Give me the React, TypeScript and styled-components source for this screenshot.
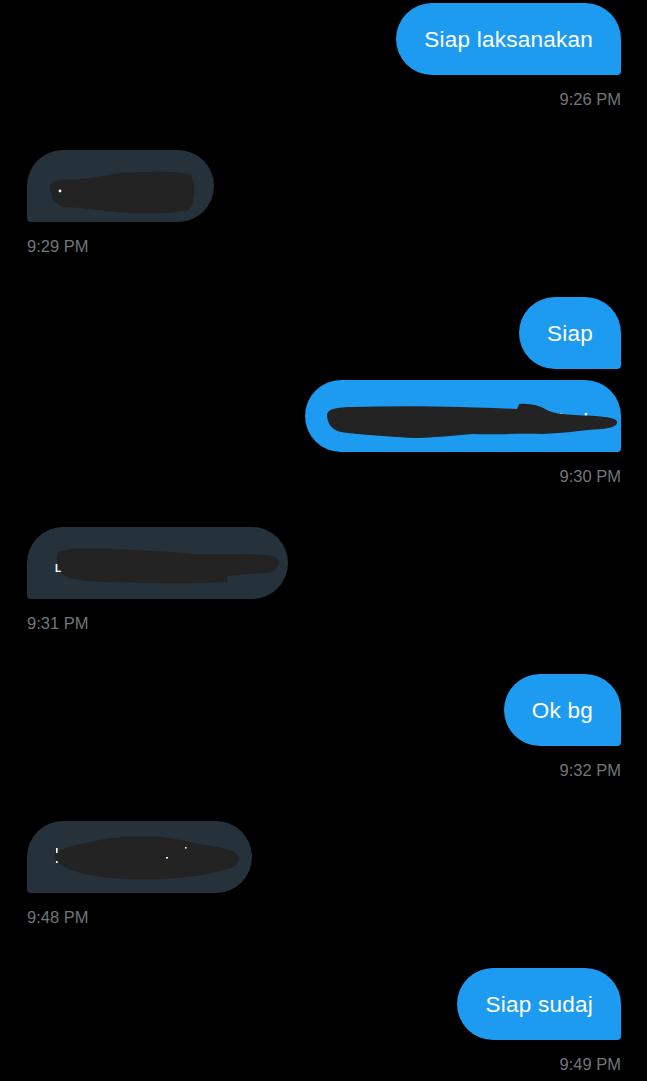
import React from 'react';
import styled, { createGlobalStyle } from 'styled-components';

const GlobalStyle = createGlobalStyle`
  html, body {
    margin: 0;
    background: #000;
  }
  body {
    font-family: "Liberation Sans", Arial, sans-serif;
  }
`;

const Thread = styled.div`
  display: flex;
  flex-direction: column;
  box-sizing: border-box;
  min-height: 1081px;
  padding: 3px 26px 0 27px;
  background: #000;
`;

const Group = styled.div<{ $mine: boolean }>`
  display: flex;
  flex-direction: column;
  align-items: ${(p) => (p.$mine ? 'flex-end' : 'flex-start')};
  gap: 11px;
  margin-bottom: 41px;
`;

const Bubble = styled.div<{ $mine: boolean }>`
  padding: 23px 28px 21px;
  font-size: 22.5px;
  line-height: 28px;
  letter-spacing: 0.25px;
  color: #fff;
  white-space: nowrap;
  background: ${(p) => (p.$mine ? '#1d9bf0' : '#26323b')};
  border-radius: 36px;
  ${(p) =>
    p.$mine ? 'border-bottom-right-radius: 4px;' : 'border-bottom-left-radius: 4px;'}
`;

const Redacted = styled.svg`
  display: block;
  height: 28px;
  margin: -1px 0 1px;
  overflow: visible;
`;

const Time = styled.div`
  margin-top: 3px;
  font-size: 16.5px;
  line-height: 20px;
  color: #71767b;
`;

const INK = '#232323';

// hand scribbles drawn over the hidden text
const scribbles: Record<string, React.ReactNode> = {
  a: (
    <>
      <path
        fill={INK}
        d="M -5 14 C -5 9, 5 7, 20 7 C 45 6, 50 2, 70 1 C 100 -1, 125 -1, 136 3 C 141 12, 141 30, 134 38 C 115 42, 90 42, 70 41 C 50 39, 30 36, 10 35 C -2 33, -5 24, -5 14 Z"
      />
      <circle cx={5} cy={19} r={1.4} fill="#fff" />
    </>
  ),
  b: (
    <>
      <text x={214} y={27} fill="#fff" fontSize={22} fontFamily="Liberation Sans, sans-serif">
        ified
      </text>
      <path
        fill={INK}
        d="M -6 13 C -6 7, 4 5, 20 5 C 80 3, 140 5, 184 7 L 186 2 C 196 1, 206 3, 214 8 C 220 12, 240 13, 262 14 C 278 15, 285 17, 284 21 C 283 26, 272 27, 255 28 C 240 30, 225 31, 210 32 C 180 31, 160 33, 140 32 C 115 34, 95 36, 80 36 C 50 34, 20 32, 8 30 C -2 28, -6 20, -6 13 Z"
      />
    </>
  ),
  c: (
    <>
      <path
        fill={INK}
        d="M 2 6 C 2 0, 20 -1, 50 0 C 90 1, 120 3, 140 5 C 180 5, 215 4, 222 9 C 226 14, 224 22, 212 24 C 195 25, 180 26, 172 27 L 172 33 C 140 35, 90 34, 50 33 C 25 32, 10 30, 6 24 C 3 20, 1 12, 2 6 Z"
      />
      <text x={0} y={23} fill="#fff" fontSize={10} fontWeight={700} fontFamily="Liberation Sans, sans-serif">
        L
      </text>
    </>
  ),
  d: (
    <>
      <path
        fill={INK}
        d="M 0 12 C 0 6, 20 2, 40 -2 C 60 -7, 100 -8, 120 -4 C 140 0, 165 4, 178 8 C 186 12, 186 22, 176 25 C 160 30, 140 34, 110 36 C 80 37, 50 36, 30 31 C 10 27, 0 20, 0 12 Z"
      />
      <rect x={1} y={5} width={1.6} height={5} fill="#fff" />
      <rect x={1} y={18} width={1.6} height={2} fill="#fff" />
      <rect x={111} y={14} width={2} height={1.5} fill="#fff" />
      <rect x={130} y={4} width={1.6} height={1.6} fill="#fff" />
    </>
  ),
};

type Msg = { text?: string; hidden?: { key: string; width: number } };
type Entry = { mine: boolean; time: string; msgs: Msg[] };

const thread: Entry[] = [
  { mine: true, time: '9:26 PM', msgs: [{ text: 'Siap laksanakan' }] },
  { mine: false, time: '9:29 PM', msgs: [{ hidden: { key: 'a', width: 131 } }] },
  {
    mine: true,
    time: '9:30 PM',
    msgs: [{ text: 'Siap' }, { hidden: { key: 'b', width: 260 } }],
  },
  { mine: false, time: '9:31 PM', msgs: [{ hidden: { key: 'c', width: 205 } }] },
  { mine: true, time: '9:32 PM', msgs: [{ text: 'Ok bg' }] },
  { mine: false, time: '9:48 PM', msgs: [{ hidden: { key: 'd', width: 169 } }] },
  { mine: true, time: '9:49 PM', msgs: [{ text: 'Siap sudaj' }] },
];

export default function App() {
  return (
    <>
      <GlobalStyle />
      <Thread>
        {thread.map((entry, i) => (
          <Group key={i} $mine={entry.mine}>
            {entry.msgs.map((m, j) => (
              <Bubble key={j} $mine={entry.mine}>
                {m.hidden ? (
                  <Redacted width={m.hidden.width} viewBox={`0 0 ${m.hidden.width} 28`}>
                    {scribbles[m.hidden.key]}
                  </Redacted>
                ) : (
                  m.text
                )}
              </Bubble>
            ))}
            <Time>{entry.time}</Time>
          </Group>
        ))}
      </Thread>
    </>
  );
}
